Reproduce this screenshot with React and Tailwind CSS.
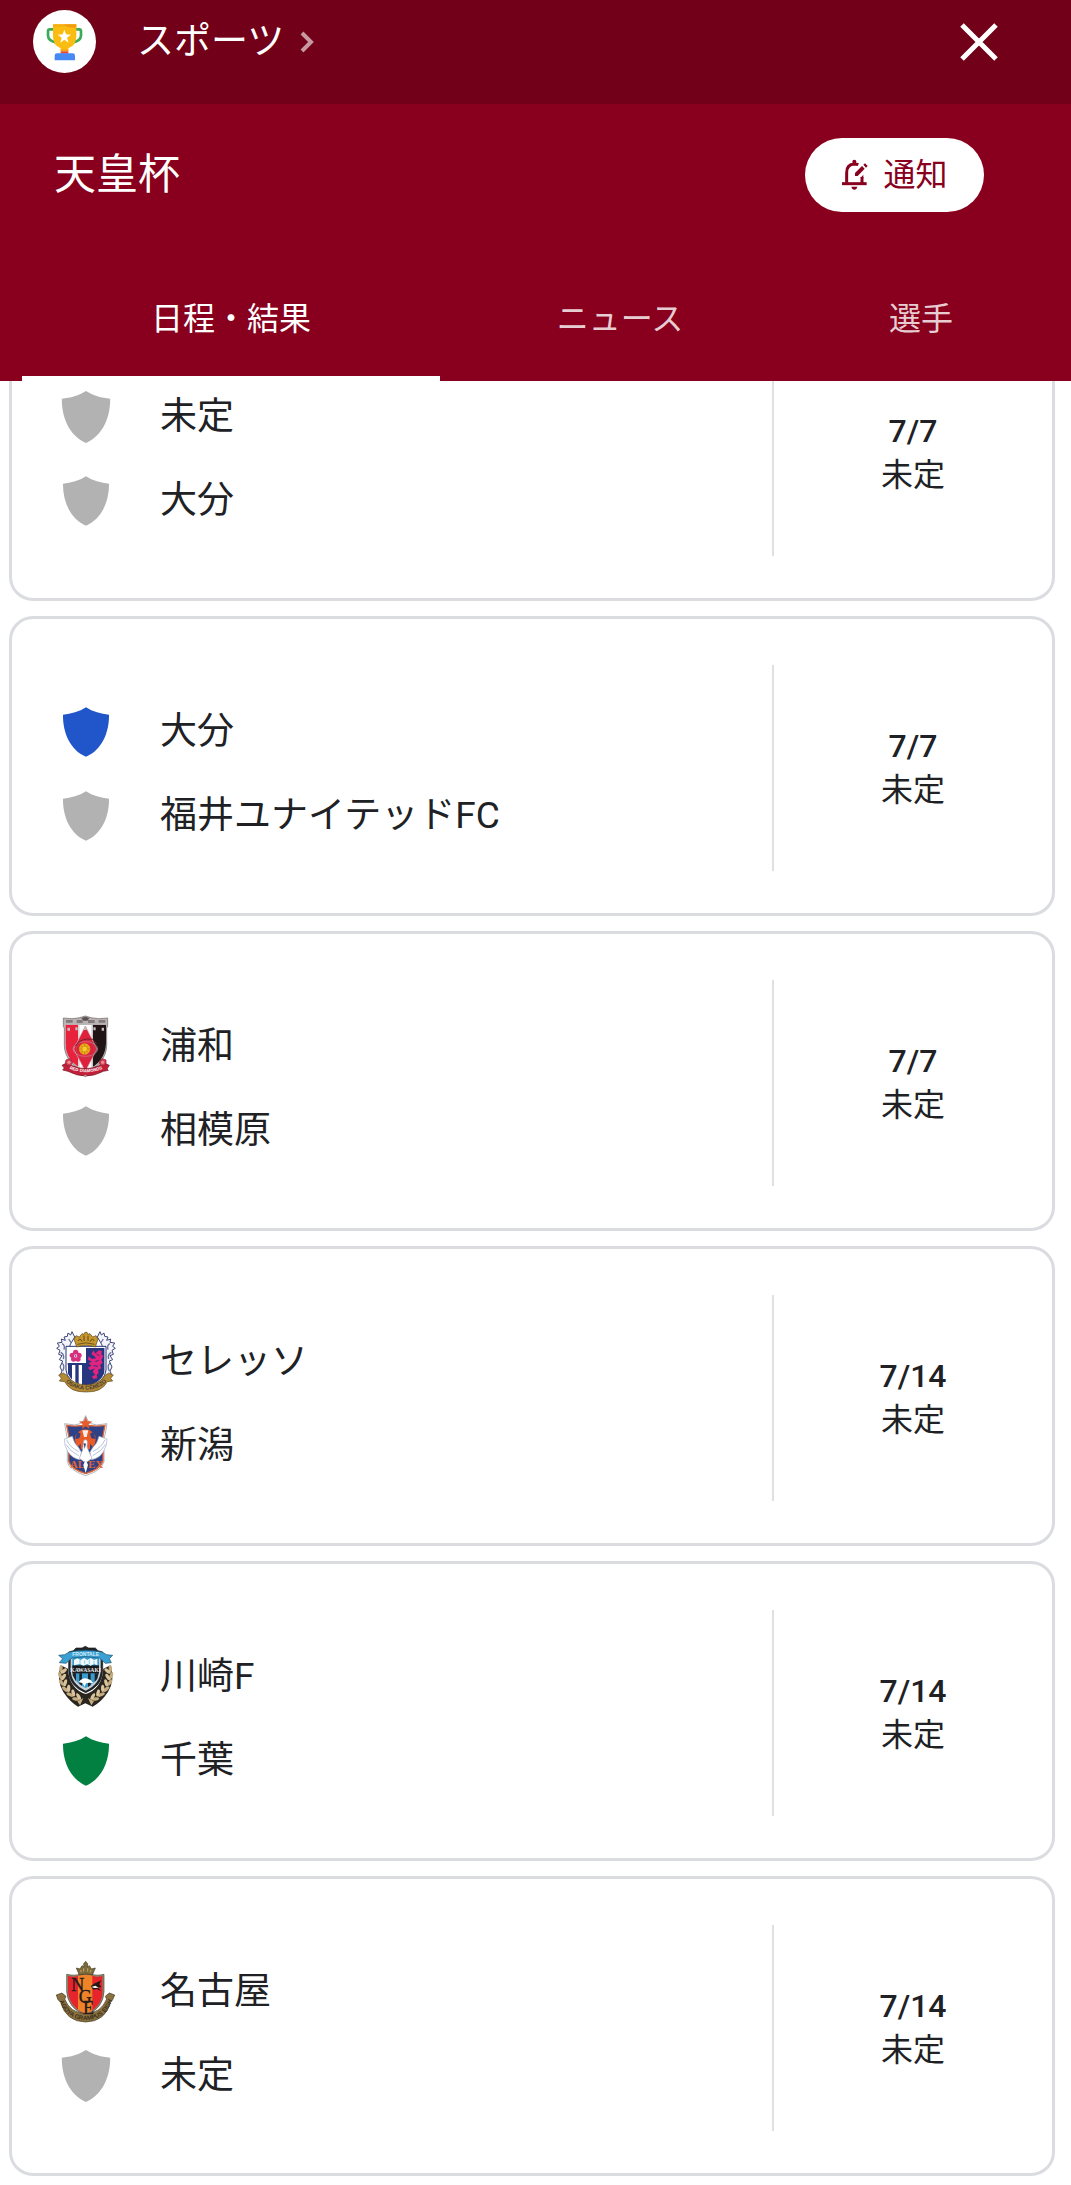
import React, { useState } from "react";

const TABS = [
  { id: "schedule", label: "日程・結果" },
  { id: "news", label: "ニュース" },
  { id: "players", label: "選手" },
];

const MATCHES = [
  { home: { name: "未定", crest: "tbd" }, away: { name: "大分", crest: "gray" }, date: "7/7" },
  { home: { name: "大分", crest: "blue" }, away: { name: "福井ユナイテッドFC", crest: "gray" }, date: "7/7" },
  { home: { name: "浦和", crest: "urawa" }, away: { name: "相模原", crest: "gray" }, date: "7/7" },
  { home: { name: "セレッソ", crest: "cerezo" }, away: { name: "新潟", crest: "niigata" }, date: "7/14" },
  { home: { name: "川崎F", crest: "kawasaki" }, away: { name: "千葉", crest: "green" }, date: "7/14" },
  { home: { name: "名古屋", crest: "nagoya" }, away: { name: "未定", crest: "tbd" }, date: "7/14" },
];

const Shield = ({ color, large }) => (
  <svg viewBox="-90 -90 180 180" className="w-15 h-15" aria-hidden="true">
    <path
      fill={color}
      transform={large ? "scale(1.05)" : undefined}
      d="M0-74C20-61 45-54 69-52C70 0 48 54 0 74C-48 54-70 0-69-52C-45-54-20-61 0-74Z"
    />
  </svg>
);

const Urawa = () => (
  <svg viewBox="48 51 180 180" className="w-15 h-15 overflow-visible" aria-hidden="true">
    <defs>
      <clipPath id="urawa-body">
        <path d="M76 74H198V130C198 166 176 198 137 212C98 198 76 166 76 130Z" />
      </clipPath>
      <path id="urawa-arc" d="M88 207Q137 226 188 207" />
    </defs>
    <path
      d="M70 54L96 56Q118 55 136 48Q154 55 176 56L203 54V80L200 84V136C200 172 172 206 137 218C102 206 73 172 73 136V84L70 80Z"
      fill="#b9b3b3"
      stroke="#6b6264"
      strokeWidth="2"
    />
    <path d="M78 60H98V68H78ZM110 60H128V69H110ZM144 60H164V69H144ZM176 60H196V68H176Z" fill="#81797b" />
    <path d="M124 54L136 50L148 54L142 62H130Z" fill="#5c5154" />
    <g clipPath="url(#urawa-body)">
      <path d="M70 70H205V220H70Z" fill="#fff" />
      <path d="M70 70H114V220H70Z" fill="#e8213c" />
      <path d="M158 70H205V220H158Z" fill="#211415" />
      <path d="M114 70H119V220H114ZM154 70H158V220H154Z" fill="#d9d3d4" />
    </g>
    <path d="M136 78L171 147L136 214L101 147Z" fill="#e0203d" stroke="#c9aeb2" strokeWidth="2" />
    <path d="M82 83H90V92H82ZM106 82H113V91H106ZM132 80H140V90H132ZM160 82H167V91H160ZM185 83H192V92H185Z" fill="#c3bcbc" />
    <ellipse cx="136" cy="147" rx="37" ry="22" fill="none" stroke="#c9929a" strokeWidth="2" />
    <ellipse cx="136" cy="147" rx="27" ry="29" fill="none" stroke="#b14a59" strokeWidth="2" />
    <path d="M106 138Q122 112 158 118L170 132" fill="none" stroke="#7c1b2a" strokeWidth="3" />
    <circle cx="134" cy="147" r="17" fill="#e8a91c" />
    <path d="M134 130V164M117 147H151M122 136L146 159M146 136L122 159" stroke="#b97a15" strokeWidth="2" />
    <circle cx="134" cy="147" r="7" fill="#f6cb2a" />
    <path
      d="M66 196L78 190L94 196Q136 216 180 196L194 190L208 196L201 207L205 211L190 214Q137 242 84 214L68 210L73 204Z"
      fill="#c41f39"
      stroke="#6d1421"
      strokeWidth="2"
    />
    <path d="M78 180L90 176L98 186L92 198L80 196L76 188ZM178 186L186 176L198 180L198 192L190 198L180 196Z" fill="#d63a50" stroke="#8b1b2e" strokeWidth="2" />
    <circle cx="87" cy="187" r="5" fill="#ee8d99" />
    <circle cx="188" cy="187" r="5" fill="#ee8d99" />
    <text fontSize="13" fontWeight="700" fill="#fff" className="font-['Liberation_Sans']">
      <textPath href="#urawa-arc" startOffset="50%" textAnchor="middle">
        RED DIAMONDS
      </textPath>
    </text>
    <circle cx="136" cy="228" r="4" fill="#b3939a" />
  </svg>
);

const Cerezo = () => (
  <svg viewBox="48 51 180 180" className="w-15 h-15 overflow-visible" aria-hidden="true">
    <defs>
      <clipPath id="cerezo-body">
        <path d="M82 98H194V165Q192 198 138 216Q84 198 82 165Z" />
      </clipPath>
      <path id="cerezo-arc" d="M74 194Q90 222 138 224Q186 222 203 194" />
    </defs>
    {/* wolves on both sides */}
    <g fill="#f4f5fa" stroke="#3b4478" strokeWidth="3" strokeLinejoin="round">
      <path d="M104 66L96 50L92 60L84 54L82 64L72 66L76 76L64 72L66 82L52 84L58 94L50 100L60 106L56 118L66 122L58 134L68 138L60 156L66 168L60 182L84 186L90 90Z" />
      <path d="M172 66L180 50L184 60L192 54L194 64L204 66L200 76L212 72L210 82L224 84L218 94L226 100L216 106L220 118L210 122L218 134L208 138L216 156L210 168L216 182L192 186L186 90Z" />
    </g>
    <path
      d="M66 86Q76 90 72 104M62 112Q74 118 70 132M66 144Q76 152 68 168M86 72L94 84M210 86Q200 90 204 104M214 112Q202 118 206 132M210 144Q200 152 208 168M190 72L182 84"
      fill="none"
      stroke="#6a7199"
      strokeWidth="4"
    />
    <path d="M78 94H198V165Q196 202 138 220Q80 202 78 165Z" fill="#fff" stroke="#293478" strokeWidth="3" />
    <g clipPath="url(#cerezo-body)">
      <path d="M82 98H194V220H82Z" fill="#fff" />
      <path d="M138 98H196V220H138ZM82 144H138V150H82ZM84 150H96V220H84ZM106 150H116V220H106ZM126 150H138V220H126Z" fill="#28357f" />
    </g>
    {/* cherry blossom */}
    <g fill="#d8307f">
      <circle cx="107" cy="112" r="8" />
      <circle cx="97" cy="121" r="8" />
      <circle cx="117" cy="121" r="8" />
      <circle cx="101" cy="132" r="8" />
      <circle cx="114" cy="132" r="8" />
    </g>
    <circle cx="107" cy="123" r="5" fill="#f6c3dc" />
    <circle cx="107" cy="123" r="2" fill="#28357f" />
    {/* lion */}
    <path
      d="M160 106L166 116L176 106L186 108L184 118L190 124L184 134L188 144L180 150L184 160L174 164L176 174L170 180L172 190L160 192L156 184L166 180L158 170L164 160L150 166L144 158L154 152L146 144L156 140L144 134L146 124L156 132L168 130L162 122L154 118Z"
      fill="#e2237f"
    />
    <path d="M166 140L176 136M160 152L174 154M170 118L178 122M184 166L190 150" stroke="#28357f" strokeWidth="3" />
    {/* crown */}
    <path
      d="M110 96L102 72L108 62L118 66L126 56L132 58L135 52H141L144 58L150 56L158 66L168 62L174 72L166 96Q138 86 110 96Z"
      fill="#c7962f"
      stroke="#54461f"
      strokeWidth="2"
    />
    <path d="M114 78Q120 66 126 80M132 78V62M144 78V62M150 80Q158 66 162 78" fill="none" stroke="#614c1b" strokeWidth="3" />
    <path d="M112 88Q138 79 164 88" fill="none" stroke="#6c5520" strokeWidth="3" />
    {/* ribbon */}
    <path
      d="M56 180L70 174L82 182Q98 208 138 210Q178 208 194 182L206 174L220 180L212 190L218 198L202 200Q186 232 138 231Q90 232 74 200L58 198L64 190Z"
      fill="#b58a34"
      stroke="#5d4b22"
      strokeWidth="2"
    />
    <text fontSize="17" fontWeight="700" fill="#463b33" className="font-['Liberation_Sans']">
      <textPath href="#cerezo-arc" startOffset="50%" textAnchor="middle">
        OSAKA CEREZO
      </textPath>
    </text>
  </svg>
);

const Niigata = () => (
  <svg viewBox="48 303 180 180" className="w-15 h-15 overflow-visible" aria-hidden="true">
    <path
      d="M74 326L104 330L120 326L130 318L137 302L144 318L154 326L170 330L201 326L197 350L192 372V440Q186 466 137 482Q88 466 82 440V372L78 350Z"
      fill="#fff"
      stroke="#8b8f98"
      strokeWidth="2"
    />
    <path d="M80 331Q108 336 137 330Q166 336 195 331L189 362V438Q182 462 137 476Q92 462 86 438V362Z" fill="#2f4285" stroke="#d8643b" strokeWidth="4" />
    <path d="M137 306L142 319L156 320L145 328L148 341L137 334L126 341L129 328L118 320L132 319Z" fill="#ea5a2a" stroke="#a75f4b" strokeWidth="1" />
    {/* ball */}
    <circle cx="136" cy="374" r="31" fill="#ea5b28" />
    <path d="M112 350L122 356L118 370L106 372ZM160 350L150 356L154 370L166 372Z" fill="#2f4285" />
    <path d="M127 346H145L140 366H132Z" fill="#f5ede9" />
    <path d="M112 398L122 386V412L116 416ZM160 398L150 386V412L156 416Z" fill="#2f4285" />
    {/* swan */}
    <g fill="#fff" stroke="#a6b1c9" strokeWidth="2">
      <path d="M73 372L97 364Q102 386 116 398L124 412L120 434Q96 430 84 410Q72 392 73 372Z" />
      <path d="M201 372L177 364Q172 386 158 398L150 412L154 434Q178 430 190 410Q202 392 201 372Z" />
      <path d="M128 404L131 377Q140 370 142 380L141 396L146 408L156 430L142 440H132L118 430Z" />
    </g>
    <path d="M80 374Q88 396 116 410M78 388Q88 408 116 422M195 374Q186 396 158 410M197 388Q186 408 158 422" fill="none" stroke="#b5c3e0" strokeWidth="3" />
    <path d="M131 384L134 402L138 386Z" fill="#2f4285" />
    <g fontSize="32" fontWeight="700" fill="#e0643b" className="font-['Liberation_Serif']">
      <text x="90" y="460">AL</text>
      <text x="145" y="460">EX</text>
    </g>
    <path d="M137 434L144 450L137 474L130 450Z" fill="#fff" />
  </svg>
);

const LEAVES = [
  [66, 116, -25],
  [63, 136, -5],
  [67, 156, 12],
  [77, 175, 28],
  [91, 191, 42],
  [108, 204, 58],
];

const Kawasaki = () => (
  <svg viewBox="48 51 180 180" className="w-15 h-15 overflow-visible" aria-hidden="true">
    {/* laurel */}
    <path d="M62 106Q48 150 70 186Q90 216 114 230L136 220L158 230Q184 216 204 186Q226 150 212 106L190 116Q186 176 137 192Q88 176 84 116Z" fill="#2a261f" />
    {[false, true].map((flip) => (
      <g key={String(flip)} transform={flip ? "translate(274 0) scale(-1 1)" : undefined}>
        {LEAVES.map(([x, y, rotate]) => (
          <g key={y} transform={`translate(${x} ${y}) rotate(${-rotate})`}>
            <ellipse cx="-3" cy="0" rx="5" ry="11" fill="#c5ab80" transform="rotate(-22)" />
            <ellipse cx="9" cy="0" rx="5" ry="11" fill="#d9c49c" transform="rotate(28)" />
          </g>
        ))}
        <path d="M112 214Q122 210 130 204L120 226Z" fill="#c9b084" />
      </g>
    ))}
    <path
      d="M136 49L146 54H166L174 62L188 66V120Q188 168 137 188Q86 168 86 120V66L100 62L108 54H126Z"
      fill="#23272b"
      stroke="#15181b"
      strokeWidth="2"
    />
    <path d="M92 72H182V118Q182 162 137 182Q92 162 92 118Z" fill="#c9d2d6" />
    <path d="M97 78H177V118Q177 156 137 174Q97 156 97 118Z" fill="#3a9ccd" />
    <path d="M97 106H177V130H97Z" fill="#17191c" />
    <path d="M98 130H108V154L98 136ZM118 130H126V167L118 162ZM144 130H152V166L144 171ZM164 130H176L172 146L164 156Z" fill="#1c2227" />
    {/* ribbon */}
    <path d="M56 76L74 74L88 66Q137 56 186 66L200 74L218 76L208 86L214 98L196 100L178 84Q137 76 96 84L78 100L58 98L68 86Z" fill="#3aa0d3" stroke="#14506e" strokeWidth="2" />
    <text x="137" y="78" textAnchor="middle" fontSize="15" fontWeight="700" fill="#d4edf8" className="font-['Liberation_Sans']">
      FRONTALE
    </text>
    <path d="M102 90L112 85L122 90L132 84L142 90L152 84L162 90L172 86V106L162 102L152 107L142 102L130 107L120 102L102 106Z" fill="#eff8fc" />
    <path d="M120 90V102M134 91V101M148 90V102M162 92V102" stroke="#5ab3dc" strokeWidth="2" />
    <text x="137" y="126" textAnchor="middle" fontSize="17" fontWeight="700" fill="#eceeee" className="font-['Liberation_Serif']">
      KAWASAKI
    </text>
    {/* dolphin */}
    <path d="M116 156Q128 142 142 146L152 150L160 160L148 158L138 160L134 170L128 160Z" fill="#fff" />
  </svg>
);

const Nagoya = () => (
  <svg viewBox="48 51 180 180" className="w-15 h-15 overflow-visible" aria-hidden="true">
    <defs>
      <clipPath id="nagoya-body">
        <path d="M84 93Q110 98 120 90H154Q164 98 188 93V140Q186 186 137 206Q88 186 84 140Z" />
      </clipPath>
      <path id="nagoya-arc" d="M60 172Q82 224 137 225Q192 224 214 172" />
    </defs>
    <path d="M80 88Q108 94 120 86H154Q166 94 192 88V140Q190 190 137 211Q84 190 80 140Z" fill="#8d8873" stroke="#4e4a39" strokeWidth="2" />
    <g clipPath="url(#nagoya-body)">
      <path d="M80 86H194V212H80Z" fill="#e5242b" />
      <path d="M114 86H157V212H114Z" fill="#f08228" />
    </g>
    {/* crown */}
    <path
      d="M118 90L109 69L120 72L126 62L132 66L131 56L137 49L143 56L142 66L148 62L154 72L166 69L157 90Q137 84 118 90Z"
      fill="#7f6a3c"
      stroke="#40361f"
      strokeWidth="2"
    />
    <path d="M124 82L122 75M131 80V70M143 80V70M151 82L153 75" stroke="#c3a86a" strokeWidth="3" />
    {/* orca */}
    <path d="M152 124L162 116L172 112L184 106L178 118L184 126L174 128L184 138L170 132L160 134Z" fill="#231815" />
    <path d="M154 126L166 122L176 128L164 129Z" fill="#fff" />
    {/* ribbon */}
    <path
      d="M49 150L66 144L78 154L74 162Q90 204 137 206Q184 204 200 162L196 154L208 144L224 150L218 164L212 172Q196 230 137 231Q78 230 62 172L54 164Z"
      fill="#8a713f"
      stroke="#3e3520"
      strokeWidth="2"
    />
    <text fontSize="18" fontWeight="700" fill="#3a2f1b" className="font-['Liberation_Sans']">
      <textPath href="#nagoya-arc" startOffset="50%" textAnchor="middle">
        NAGOYA GRAMPUS EIGHT
      </textPath>
    </text>
    <g fontSize="54" fill="#241b1c" stroke="#241b1c" strokeWidth="1" className="font-['Liberation_Serif']">
      <text x="94" y="138">N</text>
      <text x="116" y="173">G</text>
      <text x="129" y="206">E</text>
    </g>
  </svg>
);

const Crest = ({ type }) => {
  switch (type) {
    case "urawa":
      return <Urawa />;
    case "cerezo":
      return <Cerezo />;
    case "niigata":
      return <Niigata />;
    case "kawasaki":
      return <Kawasaki />;
    case "nagoya":
      return <Nagoya />;
    case "blue":
      return <Shield color="#2156cb" />;
    case "green":
      return <Shield color="#028042" />;
    case "tbd":
      return <Shield color="#b2b2b2" large />;
    default:
      return <Shield color="#b2b2b2" />;
  }
};

const Trophy = () => (
  <svg viewBox="138 68 111 114" className="w-[37px] h-[38px]" aria-hidden="true">
    <path d="M160 87H150Q144 87 144 93V106Q145 122 168 126M227 87H237Q243 87 243 93V106Q242 122 219 126" fill="none" stroke="#3bab58" strokeWidth="8" />
    <path d="M159 72H229V108Q229 136 205 144V153H182V144Q159 136 159 108Z" fill="#fbbc12" />
    <path d="M159 72H193V79H159Z" fill="#f8ae10" />
    <path d="M193 72H229V82Q210 84 193 76Z" fill="#f29d0f" />
    <path d="M182 147H205V153H182Z" fill="#f5a512" />
    <path d="M182 153H205V160H182Z" fill="#ea4435" />
    <path d="M164 180V166Q164 159 171 159H218Q225 159 225 166V180Z" fill="#4688f4" />
    <path d="M193 88L198 102L213 103L201 112L206 127L193 118L181 127L185 112L173 103L188 102Z" fill="#fff" />
  </svg>
);

const BellEdit = () => (
  <svg viewBox="245 478 84 96" className="w-7 h-8" fill="none" stroke="currentColor" aria-hidden="true">
    <path d="M262 549V519Q262 494 285 493Q292 493 297 495" strokeWidth="9" />
    <path d="M248 552H322" strokeWidth="9" />
    <path d="M308 552V532" strokeWidth="9" />
    <path d="M304 534L312 525V536Z" fill="currentColor" stroke="none" />
    <circle cx="285" cy="486" r="6" fill="currentColor" stroke="none" />
    <path d="M276 561H294Q292 570 285 570Q278 570 276 561Z" fill="currentColor" stroke="none" />
    <path d="M287 529V520L308 499L316 507L295 529Z" fill="currentColor" stroke="none" />
    <path d="M312 495L317 491L325 499L320 504Z" fill="currentColor" stroke="none" />
  </svg>
);

const Team = ({ team }) => (
  <div className="flex h-21 items-center gap-11">
    <Crest type={team.crest} />
    <span className="text-[37px]">{team.name}</span>
  </div>
);

const MatchCard = ({ match }) => (
  <li className="flex h-[300px] rounded-3xl border-3 border-[#dadce0] bg-white">
    <div className="min-w-0 flex-1 pt-[71px] pl-11">
      <Team team={match.home} />
      <Team team={match.away} />
    </div>
    <div className="mt-[46px] mb-[42px] flex w-[280px] shrink-0 flex-col items-center justify-center border-l-2 border-[#e0e0e0] text-[32px] leading-[44px]">
      <time className="font-medium">{match.date}</time>
      <span>未定</span>
    </div>
  </li>
);

const App = () => {
  const [activeTab, setActiveTab] = useState("schedule");

  return (
    <div className="min-h-screen bg-white font-[Roboto,'Noto_Sans_CJK_JP',sans-serif] text-[#202124]" lang="ja">
      <header className="sticky top-0 z-10 bg-[#88001d] text-white">
        <div className="flex h-26 items-start justify-between bg-[#720018] pt-[10px] pr-[73px] pl-[33px]">
          <a href="#sports" className="flex h-[63px] items-center">
            <span className="flex h-[63px] w-[63px] items-center justify-center rounded-full bg-white">
              <Trophy />
            </span>
            <span className="ml-[41px] text-[37px]">スポーツ</span>
            <svg viewBox="0 0 14 22" className="ml-4 h-[22px] w-[14px]" fill="none" stroke="#c799a3" strokeWidth="4" aria-hidden="true">
              <path d="M2 2L11 11L2 20" />
            </svg>
          </a>
          <button type="button" aria-label="閉じる" className="flex h-[63px] items-center">
            <svg viewBox="0 0 38 38" className="h-[38px] w-[38px]" fill="none" stroke="currentColor" strokeWidth="5" aria-hidden="true">
              <path d="M2 2L36 36M36 2L2 36" />
            </svg>
          </button>
        </div>

        <div className="flex items-center justify-between pt-[34px] pr-[87px] pb-[41px] pl-[54px]">
          <h1 className="text-[42px] leading-[60px]">天皇杯</h1>
          <button
            type="button"
            className="flex h-[74px] w-[179px] items-center justify-center gap-[14px] rounded-full bg-white text-[32px] text-[#88001d]"
          >
            <BellEdit />
            通知
          </button>
        </div>

        <div role="tablist" className="mr-[29px] ml-[22px] grid h-32 grid-cols-[418fr_360fr_242fr]">
          {TABS.map((tab) => (
            <button
              key={tab.id}
              type="button"
              role="tab"
              aria-selected={activeTab === tab.id}
              onClick={() => setActiveTab(tab.id)}
              className={
                activeTab === tab.id
                  ? "border-b-5 border-white pt-2 text-[32px] text-white"
                  : "border-b-5 border-transparent pt-2 text-[32px] text-[#e7ccd2]"
              }
            >
              {tab.label}
            </button>
          ))}
        </div>
      </header>

      <main className="-mt-20 mr-4 ml-[9px] pb-[9px]">
        <ul className="flex flex-col gap-[15px]">
          {MATCHES.map((match, index) => (
            <MatchCard key={index} match={match} />
          ))}
        </ul>
      </main>
    </div>
  );
};

export default App;
